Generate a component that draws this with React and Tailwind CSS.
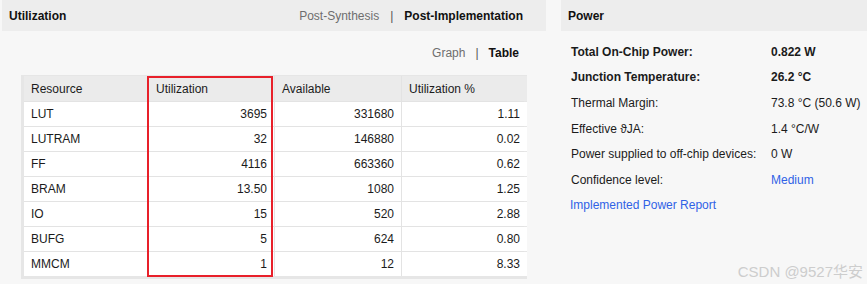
import React from 'react';

// Rapport Vivado : utilisation des ressources et puissance

const rows = [
  ['LUT', '3695', '331680', '1.11'],
  ['LUTRAM', '32', '146880', '0.02'],
  ['FF', '4116', '663360', '0.62'],
  ['BRAM', '13.50', '1080', '1.25'],
  ['IO', '15', '520', '2.88'],
  ['BUFG', '5', '624', '0.80'],
  ['MMCM', '1', '12', '8.33'],
];

const power = [
  { label: 'Total On-Chip Power:', value: '0.822 W', bold: true },
  { label: 'Junction Temperature:', value: '26.2 °C', bold: true },
  { label: 'Thermal Margin:', value: '73.8 °C (50.6 W)' },
  { label: 'Effective ϑJA:', value: '1.4 °C/W' },
  { label: 'Power supplied to off-chip devices:', value: '0 W' },
  { label: 'Confidence level:', value: 'Medium', link: true },
];

export default function App() {
  return (
    <div
      className="relative w-[867px] h-[284px] bg-[#f7f7f7] text-[12px] text-[#1b1b1b] flex gap-[15px] pl-[2px] overflow-hidden"
      style={{ fontFamily: '"Liberation Sans", Arial, sans-serif' }}
    >
      {/* Panneau utilisation */}
      <div className="w-[544px] flex flex-col">
        <div className="h-[31px] bg-[#ededed] flex items-center justify-between pl-[7px] pr-[23px]">
          <span className="font-bold text-[#111]">Utilization</span>
          <div className="flex items-center">
            <span className="text-[#6e6e6e]">Post-Synthesis</span>
            <span className="text-[#555] mx-[11px]">|</span>
            <span className="font-bold text-[#111]">Post-Implementation</span>
          </div>
        </div>

        <div className="flex justify-end pr-[27px] h-[44px] items-center">
          <span className="text-[#6e6e6e]">Graph</span>
          <span className="text-[#555] mx-[10px]">|</span>
          <span className="font-bold text-[#111]">Table</span>
        </div>

        <div className="relative ml-[19px] w-[506px] bg-[#e6e6e6] px-[3px] pb-[3px] pt-px">
          <div className="grid grid-cols-[124px_125px_126px_125px] gap-x-px gap-y-px bg-[#e3e3e3]">
            {['Resource', 'Utilization', 'Available', 'Utilization %'].map((h) => (
              <div key={h} className="h-[25px] bg-[#ebebeb] flex items-center px-[7px]">
                {h}
              </div>
            ))}
            {rows.map((r) =>
              r.map((c, i) => (
                <div
                  key={r[0] + i}
                  className={
                    'h-[24px] bg-white flex items-center px-[7px] ' +
                    (i === 0 ? 'justify-start' : 'justify-end')
                  }
                >
                  {c}
                </div>
              ))
            )}
          </div>
          {/* Encadré rouge sur la colonne Utilization */}
          <div className="absolute left-[126px] top-px w-[126px] h-[201px] border-2 border-[#e8202a] pointer-events-none" />
        </div>
      </div>

      {/* Panneau puissance */}
      <div className="flex-1 flex flex-col">
        <div className="h-[31px] bg-[#ededed] flex items-center pl-[7px]">
          <span className="font-bold text-[#111]">Power</span>
        </div>
        <div className="pt-[8px] pl-[10px]">
          {power.map((p) => (
            <div key={p.label} className="h-[25.6px] flex items-center">
              <span className={'w-[200px] ' + (p.bold ? 'font-bold' : '')}>{p.label}</span>
              <span
                className={p.bold ? 'font-bold' : p.link ? 'text-[#3062e6]' : ''}
              >
                {p.value}
              </span>
            </div>
          ))}
          <div className="h-[25.6px] flex items-center -ml-px text-[#3062e6]">
            Implemented Power Report
          </div>
        </div>
      </div>

      <div className="absolute right-[4px] bottom-[5px] text-[15px] text-[#cdcdcd] leading-none" style={{ fontFamily: '"Liberation Sans", "Noto Sans CJK SC", sans-serif' }}>
        CSDN @9527华安
      </div>
    </div>
  );
}
